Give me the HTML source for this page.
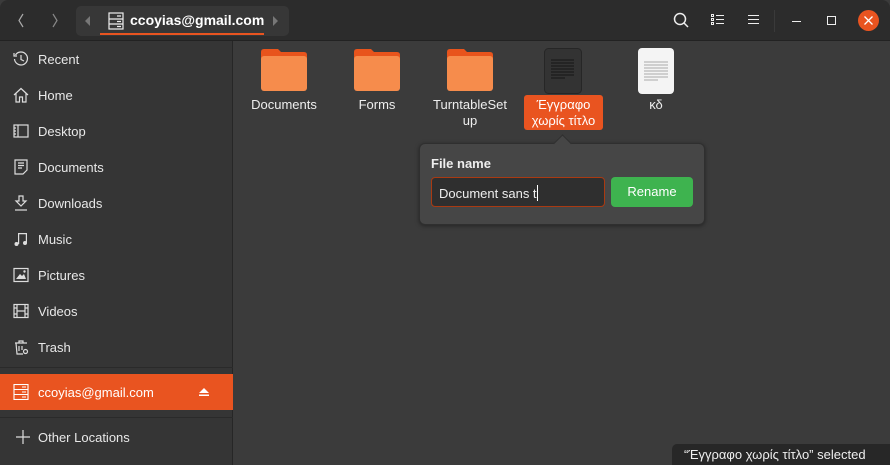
<!DOCTYPE html>
<html><head><meta charset="utf-8"><style>
*{margin:0;padding:0;box-sizing:border-box}
body{width:890px;height:465px;overflow:hidden;background:#3b3b3b;font-family:"Liberation Sans","DejaVu Sans",sans-serif;font-size:13px;color:#eee;position:relative}
.hdr{position:absolute;left:0;top:0;width:890px;height:41px;background:#2c2c2c;border-bottom:1px solid #222;border-radius:8px 8px 0 0}
.side{position:absolute;left:0;top:41px;width:233px;height:424px;background:#353535;border-right:1px solid #262626}
.it{position:absolute;left:0;width:233px;height:36px;display:flex;align-items:center;padding-left:38px;font-size:13px;color:#e8e8e8}
.it svg{position:absolute;left:13px;top:10px}
.sep{position:absolute;left:0;width:233px;height:1px;background:#2a2a2a}
.file{position:absolute;text-align:center;font-size:13px;color:#eee;line-height:16px}
.fold{position:absolute;width:46px;height:42px}
</style></head><body>
<div class="hdr">
 <svg style="position:absolute;left:16px;top:12px" width="10" height="17"><path d="M7 2L3 8.5L7 15" stroke="#aaa" fill="none" stroke-width="1.2"/></svg>
 <svg style="position:absolute;left:50px;top:12px" width="10" height="17"><path d="M3 2L7 8.5L3 15" stroke="#888" fill="none" stroke-width="1.2"/></svg>
 <div style="position:absolute;left:76px;top:6px;width:213px;height:30px;background:#373737;border-radius:5px"></div>
 <svg style="position:absolute;left:85px;top:16px" width="6" height="10"><path d="M5 0L0 5L5 10Z" fill="#777"/></svg>
 <svg style="position:absolute;left:273px;top:16px" width="6" height="10"><path d="M0 0L5 5L0 10Z" fill="#777"/></svg>
 <svg style="position:absolute;left:108px;top:12px" width="16" height="18"><g fill="none" stroke="#eee" stroke-width="1.2"><rect x="1" y="1" width="14" height="16"/><path d="M1 7H15M1 12H15M9 4H13M9 9.5H13M9 14.5H13"/></g></svg>
 <div style="position:absolute;left:130px;top:12px;font-weight:bold;font-size:14px;color:#fff">ccoyias@gmail.com</div>
 <div style="position:absolute;left:100px;top:33px;width:164px;height:2px;background:#e95420"></div>
 <svg style="position:absolute;left:673px;top:12px" width="16" height="17"><circle cx="7" cy="7" r="5.5" stroke="#eee" fill="none" stroke-width="1.5"/><path d="M11 11L15 15" stroke="#eee" stroke-width="1.5"/></svg>
 <svg style="position:absolute;left:711px;top:14px" width="13" height="12"><g fill="none" stroke="#eee"><rect x="0.5" y="0.5" width="2" height="2"/><rect x="0.5" y="4.5" width="2" height="2"/><rect x="0.5" y="8.5" width="2" height="2"/><path d="M5 1.5H13M5 5.5H13M5 9.5H13"/></g></svg>
 <svg style="position:absolute;left:748px;top:14px" width="11" height="12"><path d="M0 1.5H11M0 5.5H11M0 9.5H11" stroke="#eee"/></svg>
 <div style="position:absolute;left:774px;top:10px;width:1px;height:22px;background:#3a3a3a"></div>
 <div style="position:absolute;left:792px;top:21px;width:9px;height:1px;background:#eee"></div>
 <div style="position:absolute;left:827px;top:16px;width:9px;height:9px;border:1px solid #eee"></div>
 <div style="position:absolute;left:858px;top:10px;width:21px;height:21px;border-radius:50%;background:#e95420"></div>
 <svg style="position:absolute;left:863px;top:15px" width="11" height="11"><path d="M1.5 1.5L9.5 9.5M9.5 1.5L1.5 9.5" stroke="#fff" stroke-width="1.3"/></svg>
</div>
<div class="side">
 <div class="it" style="top:0"><svg width="16" height="16"><g fill="none" stroke="#ddd" stroke-width="1.2"><path d="M2.5 4A6.5 6.5 0 1 1 1.5 8"/><path d="M1 2V5H4"/><path d="M8 4V8.5L11 10"/></g></svg>Recent</div>
 <div class="it" style="top:36px"><svg width="16" height="16"><path d="M1 8L8 1.5L15 8M3 6.5V15H6.5V10H9.5V15H13V6.5" fill="none" stroke="#ddd" stroke-width="1.2"/></svg>Home</div>
 <div class="it" style="top:72px"><svg width="16" height="16"><g fill="none" stroke="#ddd" stroke-width="1.2"><rect x="1" y="2" width="14" height="12"/><path d="M5 2V14M1 5H3M1 8H3M1 11H3"/></g></svg>Desktop</div>
 <div class="it" style="top:108px"><svg width="16" height="16"><g fill="none" stroke="#ddd" stroke-width="1.2"><path d="M2 1H14V11L10 15H2Z"/><path d="M5 4H11M5 6.5H11M5 9H9"/></g></svg>Documents</div>
 <div class="it" style="top:144px"><svg width="16" height="16"><g fill="none" stroke="#ddd" stroke-width="1.2"><path d="M6 1H10V6H13L8 11L3 6H6Z"/><path d="M2 15H14"/></g></svg>Downloads</div>
 <div class="it" style="top:180px"><svg width="16" height="16"><g fill="#ddd"><path d="M5 2H14V12H12.8V3.2H6.2V13H5Z"/><circle cx="3.5" cy="13" r="2"/><circle cx="12" cy="12" r="2"/></g></svg>Music</div>
 <div class="it" style="top:216px"><svg width="16" height="16"><rect x="1" y="1.5" width="14" height="13" fill="none" stroke="#ddd" stroke-width="1.2"/><path d="M3 12L7 7L9 9L11 7L13 12Z" fill="#ddd"/><circle cx="11.5" cy="4.5" r="1.2" fill="#ddd"/></svg>Pictures</div>
 <div class="it" style="top:252px"><svg width="16" height="16"><g fill="none" stroke="#ddd" stroke-width="1.2"><rect x="1" y="1.5" width="14" height="13"/><path d="M4 1.5V14.5M12 1.5V14.5M4 8H12M1 5H4M1 11H4M12 5H15M12 11H15"/></g></svg>Videos</div>
 <div class="it" style="top:288px"><svg width="16" height="16"><g fill="none" stroke="#ddd" stroke-width="1.2"><path d="M2 4H14M6 4V2H10V4M3 4L4 15H10M6 7V12M9 7V11"/><circle cx="12.5" cy="12.5" r="2"/></g></svg>Trash</div>
 <div class="sep" style="top:326px"></div>
 <div class="it" style="top:333px;height:36px;background:#e95420;color:#fff"><svg width="16" height="16" style="top:10px"><g fill="none" stroke="#fff" stroke-width="1.1"><rect x="1" y="0.5" width="14" height="15"/><path d="M1 5.5H15M1 10.5H15M9 3H13M9 8H13M9 13H13"/></g></svg>ccoyias@gmail.com<svg width="10" height="9" style="left:199px;top:14px"><path d="M5 0L10 5H0Z M0 6.5H10V8H0Z" fill="#fff"/></svg></div>
 <div class="sep" style="top:376px"></div>
 <div class="it" style="top:378px"><svg width="14" height="14" style="left:16px;top:11px"><path d="M7 0V14M0 7H14" stroke="#ddd" stroke-width="1.2"/></svg>Other Locations</div>
</div>
<!-- files -->
<svg class="fold" style="left:261px;top:49px" viewBox="0 0 46 42"><path d="M3 0H17L20 3H43Q46 3 46 6V12H0V3Q0 0 3 0Z" fill="#e8541c"/><rect x="0" y="7" width="46" height="35" rx="3" fill="#f68c4c"/></svg>
<svg class="fold" style="left:354px;top:49px" viewBox="0 0 46 42"><path d="M3 0H17L20 3H43Q46 3 46 6V12H0V3Q0 0 3 0Z" fill="#e8541c"/><rect x="0" y="7" width="46" height="35" rx="3" fill="#f68c4c"/></svg>
<svg class="fold" style="left:447px;top:49px" viewBox="0 0 46 42"><path d="M3 0H17L20 3H43Q46 3 46 6V12H0V3Q0 0 3 0Z" fill="#e8541c"/><rect x="0" y="7" width="46" height="35" rx="3" fill="#f68c4c"/></svg>
<div class="file" style="left:240px;top:97px;width:88px">Documents</div>
<div class="file" style="left:333px;top:97px;width:88px">Forms</div>
<div class="file" style="left:426px;top:97px;width:88px">TurntableSet<br>up</div>
<svg style="position:absolute;left:544px;top:48px" width="38" height="46"><rect x="0.5" y="0.5" width="37" height="45" rx="4" fill="#333" stroke="#262626"/><g stroke="#151515"><path d="M7 12H30M7 15H30M7 18H30M7 21H30M7 24H30M7 27H30M7 30H21"/></g></svg>
<div class="file" style="left:524px;top:95px;width:79px;height:35px;background:#e95420;border-radius:3px;color:#fff;padding-top:2px">Έγγραφο<br>χωρίς τίτλο</div>
<svg style="position:absolute;left:638px;top:48px" width="36" height="46"><rect x="0" y="0" width="36" height="46" rx="4" fill="#f4f4f4"/><g stroke="#aaa"><path d="M6 14H30M6 17H30M6 20H30M6 23H30M6 26H30M6 29H30M6 32H20"/></g></svg>
<div class="file" style="left:630px;top:97px;width:52px">κδ</div>
<!-- popover -->
<div style="position:absolute;left:419px;top:143px;width:286px;height:82px;background:#464646;border:1px solid #2f2f2f;border-radius:6px;box-shadow:0 1px 4px rgba(0,0,0,.4)"></div>
<div style="position:absolute;left:556px;top:137px;width:13px;height:13px;background:#464646;border-left:1px solid #2f2f2f;border-top:1px solid #2f2f2f;transform:rotate(45deg)"></div>
<div style="position:absolute;left:431px;top:156px;font-weight:bold;font-size:13px;color:#eee">File name</div>
<div style="position:absolute;left:431px;top:177px;width:174px;height:30px;background:#2f2f2f;border:1px solid #a93a12;border-radius:4px;padding:7px 7px;font-size:13px;color:#eee">Document sans t<span style="display:inline-block;width:1px;height:16px;background:#fff;vertical-align:-3px"></span></div>
<div style="position:absolute;left:611px;top:177px;width:82px;height:30px;background:#3eb34f;border-radius:4px;color:#fff;text-align:center;line-height:30px;font-size:13px">Rename</div>
<div style="position:absolute;left:672px;top:444px;width:218px;height:21px;background:#272727;border-radius:5px 0 0 0;color:#eee;font-size:13px;line-height:21px;padding-left:12px">“Έγγραφο χωρίς τίτλο” selected</div>
</body></html>
